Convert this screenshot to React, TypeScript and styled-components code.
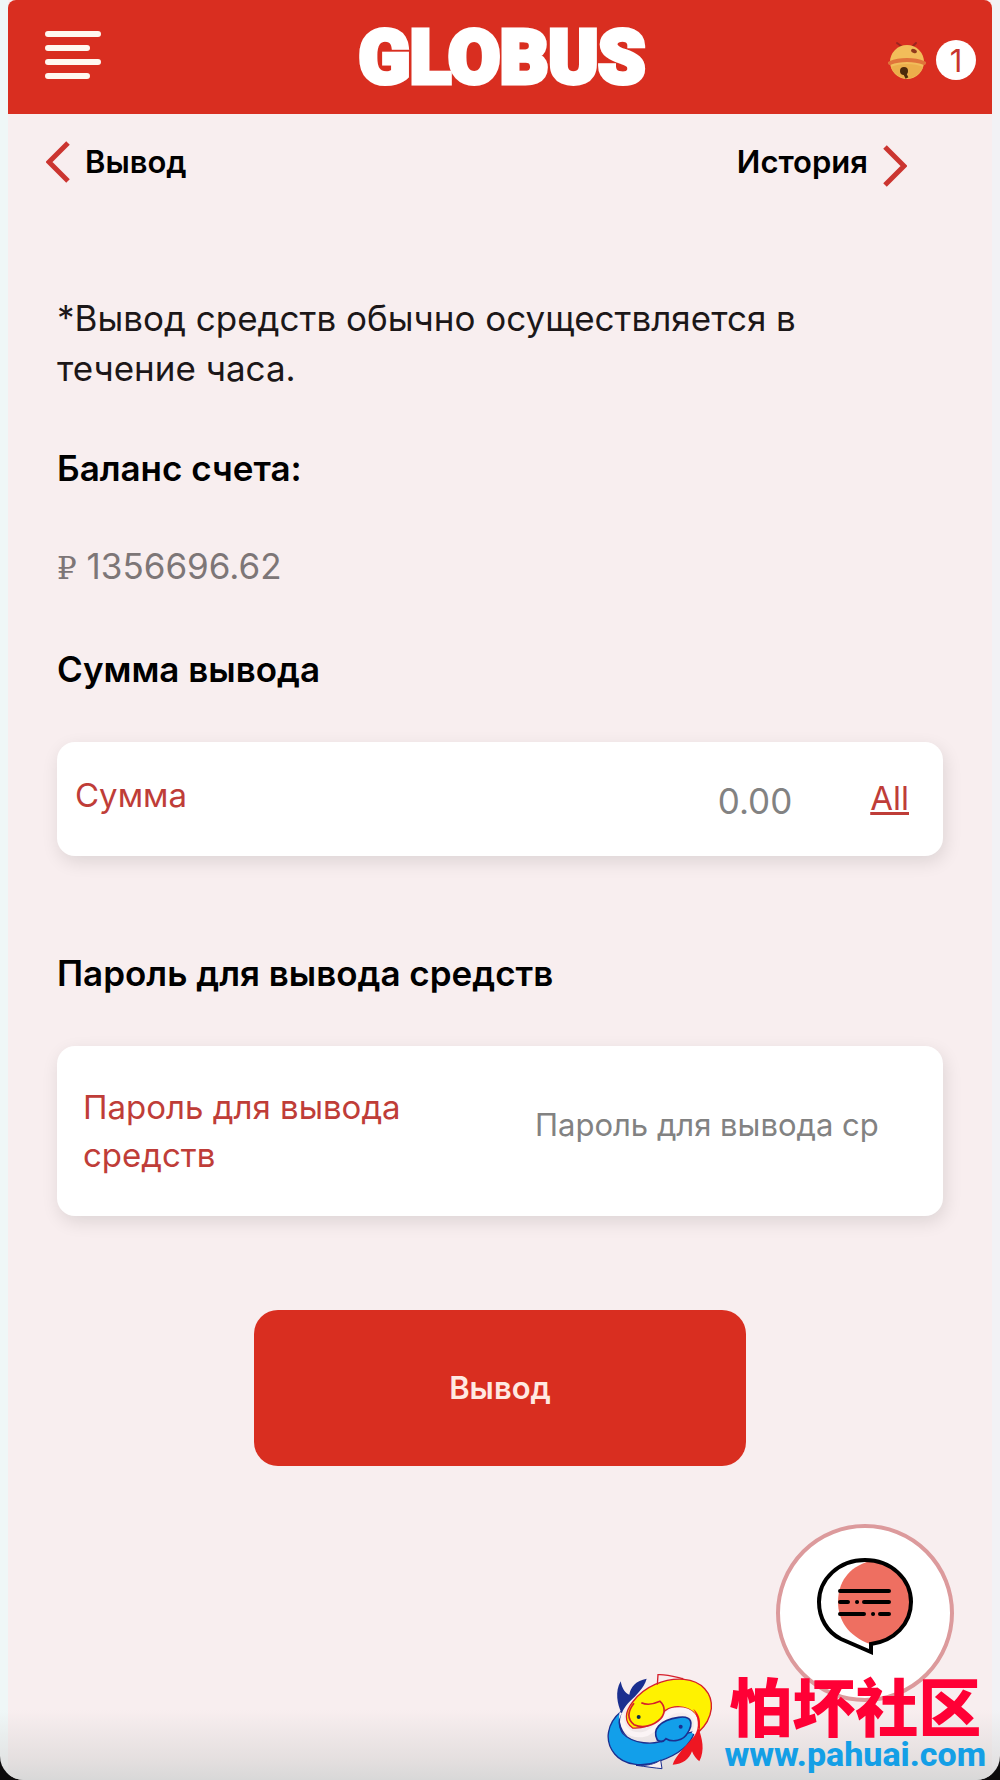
import React, { useState } from "react";
import styled, { createGlobalStyle } from "styled-components";

const GlobalStyle = createGlobalStyle`
  * {
    box-sizing: border-box;
  }

  body {
    margin: 0;
    background-color: #0c0a0b;
    font-family: Inter, "Liberation Sans", sans-serif;
  }

  button,
  input {
    font-family: inherit;
  }
`;

type ArrowPropsType = {
  direction: "left" | "right";
};

const Arrow = (props: ArrowPropsType) => {
  return (
    <svg width="24" height="42" viewBox="0 0 24 42" fill="none">
      <path
        d={
          props.direction === "left"
            ? "M22 2L3 21L22 40"
            : "M2 2L21 21L2 40"
        }
        stroke="#cb3530"
        strokeWidth="5"
      />
    </svg>
  );
};

const MenuIcon = () => {
  return (
    <svg width="56" height="48" viewBox="0 0 56 48">
      <g stroke="#fff8f0" strokeWidth="6" strokeLinecap="round">
        <path d="M3 3H53M3 17H42M3 31H53M3 45H42" />
      </g>
    </svg>
  );
};

const BellIcon = () => {
  return (
    <svg width="38" height="38" viewBox="0 0 38 38">
      <path
        d="M9 2L13 5M28 2L25 5"
        stroke="#9c2420"
        strokeWidth="2"
        strokeLinecap="round"
      />
      <circle cx="19" cy="21" r="17" fill="#f2bd5a" />
      <path d="M3 26a17 17 0 0 0 32 0c-8-4-24-4-32 0z" fill="#ecae4b" />
      <path
        d="M2 22C12 18 26 18 36 22"
        stroke="#e0743a"
        strokeWidth="4"
        strokeLinecap="round"
        fill="none"
      />
      <ellipse
        cx="26"
        cy="10"
        rx="3"
        ry="2"
        transform="rotate(25 26 10)"
        fill="#8f3a1c"
      />
      <circle cx="16" cy="30" r="4" fill="#4d2a0c" />
      <path d="M16 31L19 37" stroke="#4d2a0c" strokeWidth="3" />
    </svg>
  );
};

const ChatIcon = () => {
  return (
    <svg width="98" height="98" viewBox="0 0 98 98" fill="none">
      <path
        d="M54 4C80 6 95 24 95 45C95 66 80 83 54 87C32 79 22 63 22 45C22 26 32 10 54 4Z"
        fill="#ee6f61"
      />
      <path
        d="M49 3C75 3 95 22 95 45C95 67 78 84 55 87V95L25 82C11 75 3 61 3 45C3 22 23 3 49 3Z"
        stroke="#000"
        strokeWidth="4"
      />
      <path
        d="M24 34H73M24 45H32M41 45H41.1M48 45H73M24 57H48M57 57H57.1M64 57H73"
        stroke="#000"
        strokeWidth="4"
        strokeLinecap="round"
      />
    </svg>
  );
};

const FishLogo = () => {
  return (
    <svg width="108" height="100" viewBox="50 62 324 300">
      {/* bodies */}
      <path
        d="M96 180C52 216 44 270 76 308C104 342 160 348 208 330C262 312 304 284 316 240L230 262C196 286 128 276 100 246C88 228 88 206 96 180Z"
        fill="#129fea"
        stroke="#1b2f8f"
        strokeWidth="4"
      />
      <path
        d="M130 152C164 106 224 80 284 84C336 88 370 126 366 172C362 204 348 224 328 242C338 200 312 168 266 166C236 166 222 180 198 206C182 222 158 232 130 230C104 212 106 182 130 152Z"
        fill="#fff200"
        stroke="#d61f2b"
        strokeWidth="4"
      />
      {/* white band between the bodies */}
      <path
        d="M98 184C90 226 118 254 158 250C196 244 208 210 234 190C262 168 302 170 320 206C324 222 320 236 314 248"
        fill="none"
        stroke="#fbf4f5"
        strokeWidth="15"
      />
      {/* heads */}
      <path
        d="M156 154C176 164 194 158 212 150C226 162 230 184 214 202C192 224 160 232 134 220C114 204 112 184 134 156"
        fill="#fff200"
        stroke="#d61f2b"
        strokeWidth="5"
      />
      <path
        d="M204 266C188 236 210 206 268 198C310 192 312 218 294 246C282 268 250 274 230 262C222 272 212 272 204 266Z"
        fill="#129fea"
        stroke="#1b2f8f"
        strokeWidth="5"
      />
      <circle cx="148" cy="197" r="6" fill="#0b2f4a" />
      <circle cx="274" cy="226" r="6" fill="#1b2f8f" />
      {/* fins */}
      <path
        d="M204 100L206 70C230 68 256 76 282 82"
        fill="none"
        stroke="#d61f2b"
        strokeWidth="4"
      />
      <path
        d="M140 342C176 344 196 338 214 326L218 352C196 350 170 346 140 342Z"
        fill="#f8eeef"
        stroke="#1b2f8f"
        strokeWidth="3"
      />
      {/* tails */}
      <path
        d="M97 186C84 160 76 120 94 90C98 112 108 126 120 130C124 106 140 88 172 82C164 110 140 132 122 150C106 164 92 190 92 212C96 232 104 246 116 256C96 246 86 228 88 206Z"
        fill="#1b2f8f"
      />
      <path
        d="M328 232C338 260 348 296 330 330C322 324 312 312 308 300C300 322 280 340 250 340C258 314 290 284 312 258C326 240 334 212 312 172C332 190 336 212 328 232Z"
        fill="#ee1622"
      />
    </svg>
  );
};

function App() {
  const balance = "1356696.62";
  const [amount, setAmount] = useState("");
  const [password, setPassword] = useState("");

  return (
    <Screen>
      <GlobalStyle />
      <Page>
        <Header>
          <MenuButton type="button" aria-label="Меню">
            <MenuIcon />
          </MenuButton>
          <Logo>GLOBUS</Logo>
          <Notifications type="button" aria-label="Уведомления: 1">
            <BellIcon />
            <Badge>1</Badge>
          </Notifications>
        </Header>

        <Nav>
          <NavLink href="#back">
            <Arrow direction="left" />
            Вывод
          </NavLink>
          <NavLink href="#history" $align="flex-end">
            История
            <Arrow direction="right" />
          </NavLink>
        </Nav>

        <Form onSubmit={(e) => e.preventDefault()}>
          <Note>*Вывод средств обычно осуществляется в течение часа.</Note>
          <Title>Баланс счета:</Title>
          <Balance>
            <Currency>₽</Currency> {balance}
          </Balance>
          <Title>Сумма вывода</Title>
          <AmountCard>
            <Label htmlFor="amount">Сумма</Label>
            <AmountInput
              id="amount"
              placeholder="0.00"
              value={amount}
              onChange={(e) => setAmount(e.target.value)}
            />
            <AllButton type="button" onClick={() => setAmount(balance)}>
              All
            </AllButton>
          </AmountCard>

          <Title $spaced>Пароль для вывода средств</Title>
          <PasswordCard>
            <Label htmlFor="password">Пароль для вывода средств</Label>
            <PasswordInput
              id="password"
              type="password"
              placeholder="Пароль для вывода средств"
              value={password}
              onChange={(e) => setPassword(e.target.value)}
            />
          </PasswordCard>

          <Submit type="submit">Вывод</Submit>
        </Form>
      </Page>

      <ChatButton type="button" aria-label="Чат">
        <ChatIcon />
      </ChatButton>
      <Watermark>
        <FishLogo />
        <WatermarkText>
          <Community>怕坏社区</Community>
          <Site href="#site">www.pahuai.com</Site>
        </WatermarkText>
      </Watermark>
    </Screen>
  );
}

export default App;

const Screen = styled.div`
  position: relative;
  min-height: 100vh;
  padding: 0 8px;
  border-radius: 0 0 24px 24px;
  background: linear-gradient(
      to top,
      #d6d6d6 0,
      rgba(220, 218, 218, 0.7) 16px,
      rgba(240, 235, 235, 0) 70px
    ),
    linear-gradient(to right, #eff7f7 50%, #f2f2f5 50%);
  overflow: hidden;
`;

const Page = styled.div`
  min-height: 100vh;
  background: linear-gradient(
    to top,
    #d8d8d8 0,
    #e4dfdf 20px,
    #f8eeef 70px
  );
`;

const Header = styled.header`
  display: grid;
  grid-template-columns: 1fr auto 1fr;
  align-items: center;
  height: 114px;
  padding: 0 16px;
  border-radius: 8px 8px 0 0;
  background-color: #d92e20;
`;

const IconButton = styled.button`
  display: flex;
  padding: 0;
  border: none;
  background: none;
`;

const MenuButton = styled(IconButton)`
  justify-self: start;
  margin-left: 21px;
  padding-bottom: 4px;
`;

const Logo = styled.h1`
  margin: 0;
  padding: 0 0 0 4px;
  color: #fff;
  font-family: Roboto, sans-serif;
  font-size: 75px;
  font-weight: 900;
  line-height: 1;
  -webkit-text-stroke: 5px #fff;
`;

const Notifications = styled(IconButton)`
  align-items: center;
  justify-self: end;
  gap: 10px;
  padding-top: 6px;
`;

const Badge = styled.span`
  width: 40px;
  height: 40px;
  border-radius: 50%;
  background-color: #fff;
  color: #c8352e;
  font-size: 31px;
  line-height: 42px;
  text-align: center;
`;

const Nav = styled.nav`
  display: flex;
  justify-content: space-between;
  padding: 23px 85px 0 38px;
`;

const NavLink = styled.a<{ $align?: string }>`
  display: flex;
  align-items: ${(props) => props.$align || "center"};
  gap: 15px;
  color: #000;
  font-size: 31px;
  font-weight: 600;
  line-height: 50px;
  text-decoration: none;
`;

const Form = styled.form`
  display: flex;
  flex-direction: column;
  padding: 106px 49px 160px;
`;

const Note = styled.p`
  margin: 0 0 50px;
  color: #1c1718;
  font-size: 35px;
  line-height: 50px;
`;

const Title = styled.h2<{ $spaced?: boolean }>`
  margin: ${(props) => (props.$spaced ? "92px" : "0")} 0 48px;
  color: #000;
  font-size: 35px;
  font-weight: 600;
  line-height: 50px;
`;

const Balance = styled.p`
  margin: 0 0 53px;
  color: #7d7677;
  font-size: 35px;
  line-height: 50px;
`;

const Currency = styled.span`
  font-family: "DejaVu Serif", serif;
  font-size: 31px;
  line-height: 1;
`;

const Card = styled.div`
  display: flex;
  border-radius: 18px;
  background-color: #fff;
  box-shadow: 2px 6px 18px rgba(0, 0, 0, 0.11);
`;

const AmountCard = styled(Card)`
  height: 114px;
  padding: 29px 34px 0 18px;
`;

const PasswordCard = styled(Card)`
  align-items: center;
  justify-content: space-between;
  padding: 37px 63px 37px 26px;
`;

const Label = styled.label`
  max-width: 380px;
  color: #bf3d38;
  font-size: 33px;
  line-height: 48px;
`;

const Input = styled.input`
  min-width: 0;
  padding: 0;
  border: none;
  outline: none;
  background: none;
  color: #333;

  &::placeholder {
    color: #828282;
    opacity: 1;
  }
`;

const AmountInput = styled(Input)`
  flex: 1;
  height: 60px;
  font-size: 35px;
  text-align: right;
`;

const PasswordInput = styled(Input)`
  width: 345px;
  padding-bottom: 14px;
  font-size: 31px;
`;

const AllButton = styled.button`
  height: 54px;
  margin-left: 78px;
  padding: 0;
  border: none;
  background: none;
  color: #bf3d38;
  font-size: 33px;
  text-decoration: underline;
`;

const Submit = styled.button`
  align-self: center;
  width: 50%;
  min-width: 492px;
  margin-top: 94px;
  padding: 53px 0;
  border: none;
  border-radius: 24px;
  background-color: #d92e20;
  color: #ffe9e2;
  font-size: 31px;
  font-weight: 600;
  line-height: 50px;
`;

const ChatButton = styled.button`
  position: absolute;
  right: 46px;
  bottom: 78px;
  display: flex;
  align-items: center;
  justify-content: center;
  width: 178px;
  height: 178px;
  padding: 0 0 14px;
  border: 4px solid #dc9a9c;
  border-radius: 50%;
  background-color: #fff;
`;

const Watermark = styled.div`
  position: absolute;
  right: 14px;
  bottom: 8px;
  display: flex;
  align-items: center;
  gap: 10px;
`;

const WatermarkText = styled.div`
  display: flex;
  flex-direction: column;
  align-items: center;
`;

const Community = styled.span`
  color: #ff0035;
  font-family: "Noto Sans CJK SC", sans-serif;
  font-size: 63px;
  font-weight: 900;
  line-height: 64px;
`;

const Site = styled.a`
  color: #149fe6;
  font-family: Roboto, sans-serif;
  font-size: 34px;
  font-weight: 800;
  line-height: 36px;
  text-decoration: none;
`;
